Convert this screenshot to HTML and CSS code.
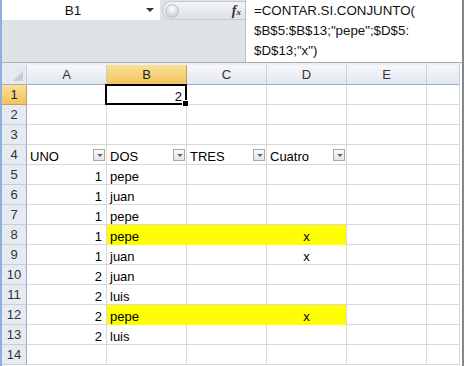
FILE: index.html
```html
<!DOCTYPE html>
<html>
<head>
<meta charset="utf-8">
<link rel="stylesheet" href="styles.css">
</head>
<body>
<div class="win">
  <div class="topbar">
    <div class="leftpane">
      <div class="namebox"><span class="nb-text">B1</span><span class="nb-arrow"></span></div>
    </div>
    <div class="pill"><span class="pill-knob"></span><span class="fx"><i>f</i><span class="fx-x">x</span></span></div>
    <div class="formula">=CONTAR.SI.CONJUNTO(<br>$B$5:$B$13;"pepe";$D$5:<br>$D$13;"x")</div>
  </div>
  <div class="sep"></div>
  <div class="sheet">
    <div class="hd corner"><span class="corner-tri"></span></div>
    <div class="hd">A</div><div class="hd sel">B</div><div class="hd">C</div><div class="hd">D</div><div class="hd">E</div><div class="hd last"></div>

    <div class="rh sel">1</div><div class="c"></div><div class="c num active">2<span class="handle"></span></div><div class="c"></div><div class="c"></div><div class="c"></div><div class="c"></div>
    <div class="rh">2</div><div class="c"></div><div class="c"></div><div class="c"></div><div class="c"></div><div class="c"></div><div class="c"></div>
    <div class="rh">3</div><div class="c"></div><div class="c"></div><div class="c"></div><div class="c"></div><div class="c"></div><div class="c"></div>
    <div class="rh">4</div><div class="c">UNO<span class="flt"></span></div><div class="c">DOS<span class="flt"></span></div><div class="c">TRES<span class="flt"></span></div><div class="c">Cuatro<span class="flt"></span></div><div class="c"></div><div class="c"></div>
    <div class="rh">5</div><div class="c num">1</div><div class="c">pepe</div><div class="c"></div><div class="c"></div><div class="c"></div><div class="c"></div>
    <div class="rh">6</div><div class="c num">1</div><div class="c">juan</div><div class="c"></div><div class="c"></div><div class="c"></div><div class="c"></div>
    <div class="rh">7</div><div class="c num">1</div><div class="c">pepe</div><div class="c"></div><div class="c"></div><div class="c"></div><div class="c"></div>
    <div class="rh">8</div><div class="c num">1</div><div class="c yl">pepe</div><div class="c yl"></div><div class="c yl yend ctr">x</div><div class="c"></div><div class="c"></div>
    <div class="rh">9</div><div class="c num">1</div><div class="c">juan</div><div class="c"></div><div class="c ctr">x</div><div class="c"></div><div class="c"></div>
    <div class="rh">10</div><div class="c num">2</div><div class="c">juan</div><div class="c"></div><div class="c"></div><div class="c"></div><div class="c"></div>
    <div class="rh">11</div><div class="c num">2</div><div class="c">luis</div><div class="c"></div><div class="c"></div><div class="c"></div><div class="c"></div>
    <div class="rh">12</div><div class="c num">2</div><div class="c yl">pepe</div><div class="c yl"></div><div class="c yl yend ctr">x</div><div class="c"></div><div class="c"></div>
    <div class="rh">13</div><div class="c num">2</div><div class="c">luis</div><div class="c"></div><div class="c"></div><div class="c"></div><div class="c"></div>
    <div class="rh">14</div><div class="c"></div><div class="c"></div><div class="c"></div><div class="c"></div><div class="c"></div><div class="c"></div>
  </div>
</div>
</body>
</html>
```
FILE: styles.css
```css
html, body {
  margin: 0;
  padding: 0;
  background: #ffffff;
}
.win {
  width: 464px;
  height: 366px;
  box-sizing: border-box;
  border-left: 2px solid #8fb0dc;
  border-right: 2px solid #7f8791;
  overflow: hidden;
  font-family: "Liberation Sans", Arial, sans-serif;
  font-size: 13px;
  color: #000;
}
.topbar {
  display: flex;
  height: 62px;
  background: #dfe3e8;
}
.leftpane {
  width: 158px;
}
.namebox {
  height: 20px;
  background: #fff;
  display: flex;
  align-items: center;
  position: relative;
  font-size: 13.5px;
}
.nb-text {
  width: 142px;
  text-align: center;
  color: #111;
}
.nb-arrow {
  width: 0;
  height: 0;
  border-left: 4px solid transparent;
  border-right: 4px solid transparent;
  border-top: 4px solid #333;
  margin-left: 2px;
}
.pill {
  width: 83px;
  height: 19px;
  margin-top: 1px;
  margin-left: 2px;
  border-radius: 10px 0 0 10px;
  background: linear-gradient(#f3f4f6, #dfe2e6);
  border: 1px solid #c3c8ce;
  border-right: none;
  box-sizing: border-box;
  display: flex;
  align-items: center;
  justify-content: space-between;
  padding: 0 4px 0 2px;
}
.pill-knob {
  width: 14px;
  height: 14px;
  border-radius: 50%;
  background: radial-gradient(circle at 50% 35%, #ffffff, #cfd3d8 70%, #b7bcc3);
  border: 1px solid #c0c5cb;
  box-sizing: border-box;
}
.fx {
  font-family: "Liberation Serif", "Times New Roman", serif;
  font-size: 14px;
  font-weight: bold;
  color: #333;
  display: flex;
  align-items: baseline;
}
.fx i {
  font-style: italic;
}
.fx-x {
  font-size: 9px;
  font-style: italic;
}
.formula {
  flex: 1;
  background: #fff;
  border-left: 1px solid #b9c0c8;
  padding: 1px 0 0 8px;
  line-height: 20px;
  font-size: 13.3px;
  color: #111;
  white-space: nowrap;
}
.sep {
  height: 2px;
  border-top: 1px solid #a8afb8;
  background: #eceef1;
}
.sheet {
  display: grid;
  grid-template-columns: 25px repeat(5, 80px) 33px;
  grid-auto-rows: 20px;
}
.hd, .rh {
  box-sizing: border-box;
  background: linear-gradient(#f5f7fa, #e3e8ef);
  border-right: 1px solid #c5cfdb;
  border-bottom: 1px solid #9eaec2;
  color: #333;
  display: flex;
  align-items: center;
  justify-content: center;
  font-size: 13px;
}
.rh {
  background: #e6ebf2;
  border-bottom: 1px solid #c5cfdb;
  border-right: 1px solid #9eaec2;
  font-size: 13px;
}
.hd.sel, .rh.sel {
  background: linear-gradient(#f9df96, #f1c560);
  border-color: #c2a25a;
  color: #222;
}
.corner {
  position: relative;
  background: #e6eaf0;
}
.corner-tri {
  position: absolute;
  right: 3px;
  bottom: 3px;
  width: 0;
  height: 0;
  border-left: 10px solid transparent;
  border-bottom: 10px solid #c7ccd3;
}
.c {
  box-sizing: border-box;
  border-right: 1px solid #d8d8d8;
  border-bottom: 1px solid #d8d8d8;
  display: flex;
  align-items: flex-end;
  line-height: 14px;
  padding: 0 3px;
  position: relative;
  white-space: nowrap;
}
.num {
  justify-content: flex-end;
  padding-right: 4px;
}
.ctr {
  justify-content: center;
}
.yl {
  background: #ffff00;
  border-right-color: #ffff00;
  border-bottom-color: #ffff00;
}
.yl.yend {
  border-right-color: #d8d8d8;
}
.active::after {
  content: "";
  position: absolute;
  left: -2px;
  top: -1px;
  right: -1px;
  bottom: -1px;
  border: 2px solid #000;
}
.handle {
  position: absolute;
  right: -3px;
  bottom: -3px;
  width: 5px;
  height: 5px;
  background: #000;
  border: 1px solid #fff;
  z-index: 2;
}
.flt {
  position: absolute;
  right: 1px;
  bottom: 3px;
  width: 12px;
  height: 12px;
  box-sizing: border-box;
  border: 1px solid #a6a6a6;
  background: linear-gradient(#fafafa, #e4e4e4);
}
.flt::after {
  content: "";
  position: absolute;
  left: 3px;
  top: 4px;
  border-left: 3px solid transparent;
  border-right: 3px solid transparent;
  border-top: 3px solid #666;
}
```
